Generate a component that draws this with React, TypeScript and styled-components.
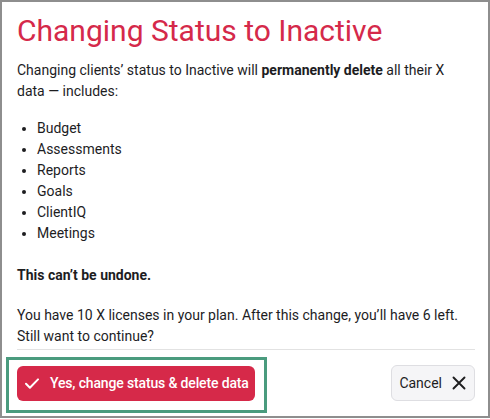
import React, { FC } from 'react';
import styled, { createGlobalStyle } from 'styled-components';

const GlobalStyle = createGlobalStyle`
  body {
    margin: 0;
    background: #fff;
    font-family: Roboto, 'Liberation Sans', sans-serif;
    color: #1d1d1f;
  }
`;

const Dialog = styled.div`
  box-sizing: border-box;
  width: 490px;
  height: 418px;
  border: 2px solid #8e8e8e;
  padding: 11px 13px 0 15px;
  display: flex;
  flex-direction: column;
`;

const Title = styled.h2`
  margin: 0;
  font-size: 30px;
  font-weight: 400;
  line-height: 36px;
  color: #d5294a;
`;

const Text = styled.p<{ $top: number; $bold?: boolean }>`
  margin: ${({ $top }) => $top}px 0 0;
  font-size: 14px;
  line-height: 21px;
  font-weight: ${({ $bold }) => ($bold ? 700 : 400)};
`;

const DataList = styled.ul`
  margin: 16px 0 0;
  padding-left: 20px;
  font-size: 14px;
  line-height: 21px;
`;

const Footer = styled.div`
  margin-top: 2px;
  padding-top: 15px;
  border-top: 1px solid #e2e2e2;
  display: flex;
  align-items: center;
  justify-content: space-between;
`;

const DangerButton = styled.button`
  position: relative;
  height: 35px;
  padding: 0 6px 0 8px;
  display: flex;
  align-items: center;
  gap: 11px;
  border: none;
  border-radius: 6px;
  background: #d62949;
  color: #fff;
  font-family: Roboto, 'Liberation Sans', sans-serif;
  font-size: 14px;
  font-weight: 500;
  letter-spacing: -0.15px;
  cursor: pointer;

  /* annotation frame drawn over the page */
  &::after {
    content: '';
    position: absolute;
    inset: -9px -12px -12px -11px;
    border: 3px solid #4a9b7e;
    pointer-events: none;
  }
`;

const CancelButton = styled.button`
  height: 36px;
  padding: 0 8px 0 7px;
  display: flex;
  align-items: center;
  gap: 10px;
  border: 1px solid #dedee2;
  border-radius: 6px;
  background: #f5f5f7;
  color: #1d1d1f;
  font-family: Roboto, 'Liberation Sans', sans-serif;
  font-size: 14px;
  cursor: pointer;
`;

const CheckIcon: FC = () => (
  <svg width="14" height="11" viewBox="0 0 14 11" fill="none">
    <path d="M1 5.8 4.9 9.7 13 1.4" stroke="#fff" strokeWidth="2" strokeLinecap="round" strokeLinejoin="round" />
  </svg>
);

const CloseIcon: FC = () => (
  <svg width="14" height="14" viewBox="0 0 14 14" fill="none">
    <path d="M1.5 1.5l11 11M12.5 1.5l-11 11" stroke="#1d1d1f" strokeWidth="1.9" strokeLinecap="round" />
  </svg>
);

const items = ['Budget', 'Assessments', 'Reports', 'Goals', 'ClientIQ', 'Meetings'];

const App: FC = () => (
  <>
    <GlobalStyle />
    <Dialog>
      <Title>Changing Status to Inactive</Title>
      <Text $top={11}>
        Changing clients’ status to Inactive will <b>permanently delete</b> all their X data — includes:
      </Text>
      <DataList>
        {items.map((item) => (
          <li key={item}>{item}</li>
        ))}
      </DataList>
      <Text $top={21} $bold>This can’t be undone.</Text>
      <Text $top={19}>
        You have 10 X licenses in your plan. After this change, you’ll have 6 left. Still want to continue?
      </Text>
      <Footer>
        <DangerButton>
          <CheckIcon />
          Yes, change status &amp; delete data
        </DangerButton>
        <CancelButton>
          Cancel
          <CloseIcon />
        </CancelButton>
      </Footer>
    </Dialog>
  </>
);

export default App;
